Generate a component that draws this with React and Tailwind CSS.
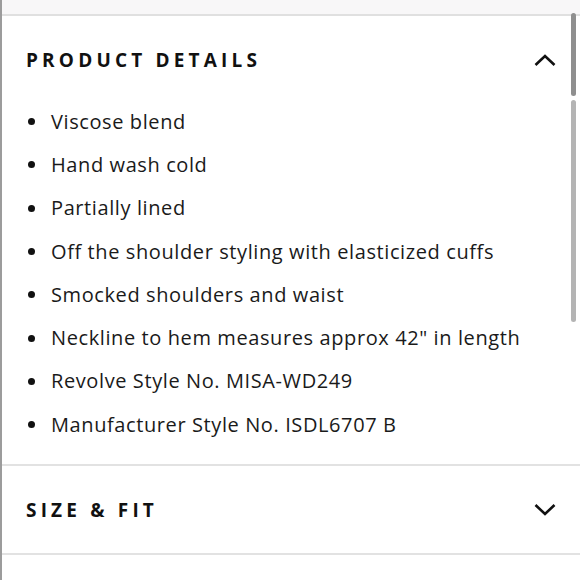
export default function App() {
  const items = [
    "Viscose blend",
    "Hand wash cold",
    "Partially lined",
    "Off the shoulder styling with elasticized cuffs",
    "Smocked shoulders and waist",
    'Neckline to hem measures approx 42" in length',
    "Revolve Style No. MISA-WD249",
    "Manufacturer Style No. ISDL6707 B",
  ];
  return (
    <div className="relative w-[580px] h-[580px] bg-white overflow-hidden border-l-2 border-[#9c9c9c]" style={{ fontFamily: "'Open Sans', Lato, sans-serif" }}>
      <div className="h-[16px] bg-[#f8f7f8] border-b-2 border-[#e0e0e0]" />
      <div className="flex items-center justify-between pl-[24px] pr-[24px] pt-[4px] h-[84px]">
        <span className="text-[19px] font-bold tracking-[0.22em] text-[#111]">PRODUCT DETAILS</span>
        <svg width="22" height="14" viewBox="0 0 22 14" fill="none" stroke="#111" strokeWidth="2.6">
          <path d="M1.5 12 L11 3 L20.5 12" />
        </svg>
      </div>
      <ul className="flex flex-col pl-[26px]">
        {items.map((t) => (
          <li key={t} className="flex items-center h-[43.3px] text-[20px] tracking-[0.03em] text-[#1a1a1a]">
            <span className="w-[7px] h-[7px] rounded-full bg-[#111] mr-[16px]" />
            {t}
          </li>
        ))}
      </ul>
      <div className="mt-[18px] border-t-2 border-[#e2e2e2]" />
      <div className="flex items-center justify-between pl-[24px] pr-[24px] h-[87px]">
        <span className="text-[19px] font-bold tracking-[0.22em] text-[#111]">SIZE &amp; FIT</span>
        <svg width="22" height="14" viewBox="0 0 22 14" fill="none" stroke="#111" strokeWidth="2.6">
          <path d="M1.5 2 L11 11 L20.5 2" />
        </svg>
      </div>
      <div className="border-t-2 border-[#e2e2e2]" />
      <div className="absolute right-[4px] top-[13px] w-[5px] h-[83px] rounded-full bg-[#8f8f8f]" />
      <div className="absolute right-[4px] top-[100px] w-[5px] h-[222px] rounded-full bg-[#b4b4b4]" />
    </div>
  );
}
